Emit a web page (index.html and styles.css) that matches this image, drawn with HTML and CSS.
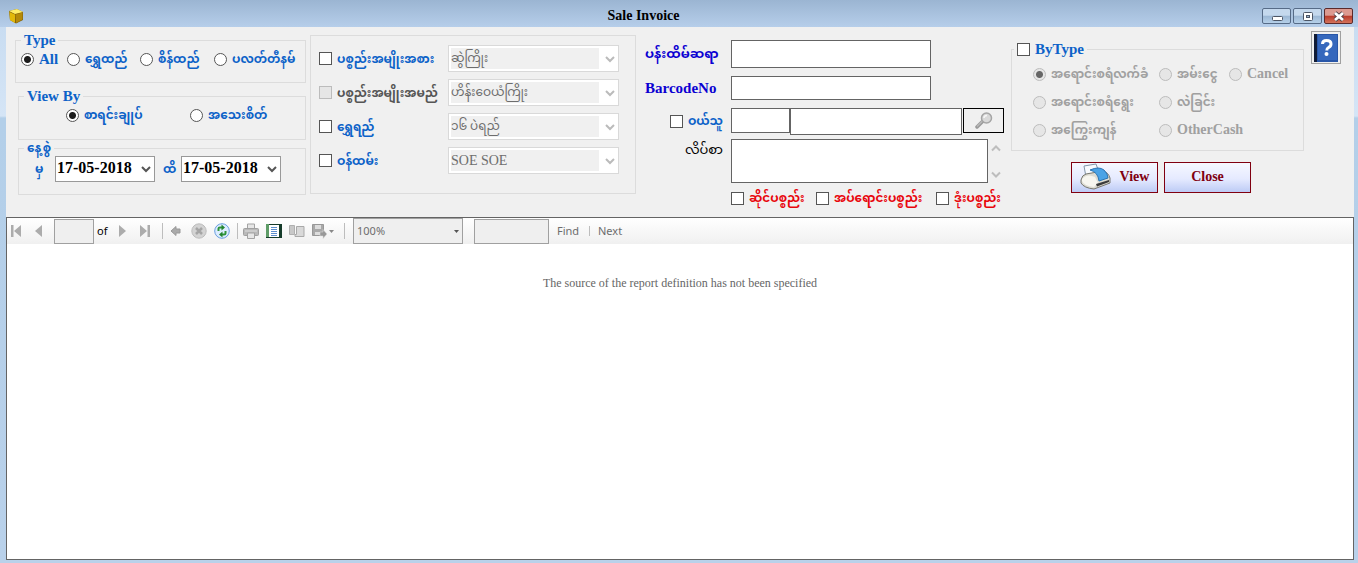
FILE: index.html
```
<!DOCTYPE html>
<html lang="my">
<head>
<meta charset="utf-8">
<title>Sale Invoice</title>
<link rel="stylesheet" href="styles.css">
</head>
<body>
<div class="window">
  <header class="titlebar">
    <svg class="app-icon" width="16" height="16" viewBox="0 0 16 16" aria-hidden="true"><path d="M1 3L9 1L15 4V12L8 15.500L2 12Z" fill="#80600c"/><path d="M1 3L9 1L15 4L7 6Z" fill="#ffed66"/><path d="M1.500 4L7 6.500V15L2 12Z" fill="#e2b809"/><path d="M7.500 6.500L14.500 4.500V11.500L8 15Z" fill="#b58a09"/></svg>
    <h1 class="title">Sale Invoice</h1>
    <div class="window-buttons">
      <button class="win-btn" type="button" aria-label="Minimize"><svg width="28" height="15" viewBox="0 0 28 15"><rect x="9.500" y="7.500" width="10" height="4" rx="1" fill="#fff" stroke="#4d5666"/></svg></button>
      <button class="win-btn" type="button" aria-label="Maximize"><svg width="28" height="15" viewBox="0 0 28 15"><rect x="9.500" y="3.500" width="9" height="8" rx="1" fill="#fff" stroke="#4d5666"/><rect x="12.500" y="6.500" width="3" height="2" fill="#9ab3cf" stroke="#4d5666"/></svg></button>
      <button class="win-btn win-close" type="button" aria-label="Close window"><svg width="28" height="15" viewBox="0 0 28 15"><path d="M10 4L18 11M18 4L10 11" stroke="#534449" stroke-width="4.500"/><path d="M10 4L18 11M18 4L10 11" stroke="#fff" stroke-width="2.800"/></svg></button>
    </div>
  </header>

  <main class="content">
    <form class="filters">
      <div class="left-groups">
        <fieldset class="group type-group">
          <legend>Type</legend>
          <div class="type-options">
            <label class="option latin"><input type="radio" name="type" checked>All</label>
            <label class="option"><input type="radio" name="type">ရွှေထည်</label>
            <label class="option"><input type="radio" name="type">စိန်ထည်</label>
            <label class="option"><input type="radio" name="type">ပလတ်တီနမ်</label>
          </div>
        </fieldset>
        <fieldset class="group view-group">
          <legend>View By</legend>
          <div class="view-options">
            <label class="option"><input type="radio" name="view" checked>စာရင်းချုပ်</label>
            <label class="option"><input type="radio" name="view">အသေးစိတ်</label>
          </div>
        </fieldset>
        <fieldset class="group date-group">
          <legend>နေ့စွဲ</legend>
          <div class="date-row">
            <label for="from">မှ</label><input class="date" id="from" type="text" value="17-05-2018">
            <label for="to">ထိ</label><input class="date" id="to" type="text" value="17-05-2018">
          </div>
        </fieldset>
      </div>

      <div class="panel">
        <label class="option"><input type="checkbox">ပစ္စည်းအမျိုးအစား</label>
        <select class="combo" disabled aria-label="ပစ္စည်းအမျိုးအစား"><option>ဆွဲကြိုး</option></select>
        <label class="option dim"><input type="checkbox" disabled>ပစ္စည်းအမျိုးအမည်</label>
        <select class="combo" disabled aria-label="ပစ္စည်းအမျိုးအမည်"><option>ဟိန်းဝေယံကြိုး</option></select>
        <label class="option"><input type="checkbox">ရွှေရည်</label>
        <select class="combo" disabled aria-label="ရွှေရည်"><option>၁၆ ပဲရည်</option></select>
        <label class="option"><input type="checkbox">ဝန်ထမ်း</label>
        <select class="combo latin" disabled aria-label="ဝန်ထမ်း"><option>SOE SOE</option></select>
      </div>

      <div class="details">
        <label class="field-label" for="smith">ပန်းထိမ်ဆရာ</label>
        <input class="field tall" id="smith" type="text">
        <label class="field-label latin" for="barcode">BarcodeNo</label>
        <input class="field" id="barcode" type="text">
        <label class="option buyer"><input type="checkbox">ဝယ်သူ</label>
        <div class="buyer-row">
          <input class="code" type="text" aria-label="Buyer code"><input class="name" type="text" aria-label="Buyer name">
          <button class="search" type="button" aria-label="Search"><svg width="18" height="17" viewBox="0 0 18 17"><path d="M2 15L8 9" stroke="#999" stroke-width="3.500" stroke-linecap="round"/><path d="M2 14.500L8 8.500" stroke="#bbb" stroke-width="1.200"/><circle cx="11.500" cy="6" r="5" fill="#d9d9d9" stroke="#a5a5a5" stroke-width="1.500"/><path d="M9 6Q9 3.500 12 3.500" fill="none" stroke="#f6f6f6" stroke-width="1.500"/></svg></button>
        </div>
        <label class="address-label" for="address">လိပ်စာ</label>
        <div class="address-row">
          <textarea id="address"></textarea>
          <svg width="16" height="44" viewBox="0 0 16 44" aria-hidden="true"><path d="M4 11.500L8 7.500L12 11.500M4 33.500L8 37.500L12 33.500" fill="none" stroke="#bdbdbd" stroke-width="2"/></svg>
        </div>
        <div class="stock-options">
          <label class="option"><input type="checkbox">ဆိုင်ပစ္စည်း</label>
          <label class="option"><input type="checkbox">အပ်ရောင်းပစ္စည်း</label>
          <label class="option"><input type="checkbox">ဒုံးပစ္စည်း</label>
        </div>
      </div>

      <div class="right-side">
        <fieldset class="group bytype">
          <legend><label class="option latin"><input type="checkbox">ByType</label></legend>
          <div class="bytype-options">
            <label class="option"><input type="radio" name="by" checked disabled>အရောင်းစရံလက်ခံ</label>
            <label class="option"><input type="radio" name="by" disabled>အမ်းငွေ</label>
            <label class="option small-latin"><input type="radio" name="by" disabled>Cancel</label>
            <label class="option"><input type="radio" name="by" disabled>အရောင်းစရံရွေး</label>
            <label class="option wide"><input type="radio" name="by" disabled>လဲခြင်း</label>
            <label class="option"><input type="radio" name="by" disabled>အကြွေးကျန်</label>
            <label class="option wide small-latin"><input type="radio" name="by" disabled>OtherCash</label>
          </div>
        </fieldset>
        <div class="actions">
          <button class="action" type="button"><svg width="32" height="28" viewBox="0 0 32 28" aria-hidden="true"><path d="M4 3L16 1L20 12L6 14Z" fill="#f8fbff" stroke="#8296aa"/><path d="M1 17Q2 12 6 11L23 8Q28 9 30 15V20L14 26Q4 25 1 20Z" fill="#dddcd3" stroke="#77776f"/><path d="M2 16Q7 10 15 14L18 20L14 24Q4 23 2 18Z" fill="#f7f6f0"/><path d="M10 7Q19 3 24 7Q28 11 28 15L19 18Q18 9 10 7Z" fill="#4aa3e6" stroke="#2c74b3"/><path d="M16 21L29 17V19L17 23.500Z" fill="#3b3b3b"/></svg><span>View</span></button>
          <button class="action" type="button">Close</button>
        </div>
      </div>

      <button class="help" type="button" aria-label="Help"><svg width="24" height="28" viewBox="0 0 24 28"><rect width="24" height="28" fill="#2856a8"/><rect x="4" y="1" width="19" height="25" fill="#3668bd"/><rect width="3" height="28" fill="#101b36"/><path d="M8.500 10Q8.500 6.500 12.500 6.500Q17 6.500 17 10Q17 12.500 14.500 13.500Q12.800 14.300 12.800 16.500" fill="none" stroke="#fff" stroke-width="3"/><circle cx="12.500" cy="20" r="2" fill="#fff"/></svg></button>
    </form>

    <section class="viewer">
      <div class="toolbar">
        <button type="button" aria-label="First page"><svg width="16" height="16" viewBox="0 0 16 16"><path d="M3 2h2.500v12H3zM13 2v12L6 8z" fill="#acacac"/></svg></button>
        <button type="button" aria-label="Previous page"><svg width="16" height="16" viewBox="0 0 16 16"><path d="M11 2v12L4 8z" fill="#acacac"/></svg></button>
        <input class="page" type="text" aria-label="Page">
        <span class="of">of</span>
        <button type="button" aria-label="Next page"><svg width="16" height="16" viewBox="0 0 16 16"><path d="M4 2v12L11 8z" fill="#acacac"/></svg></button>
        <button type="button" aria-label="Last page"><svg width="16" height="16" viewBox="0 0 16 16"><path d="M10.500 2H13v12h-2.500zM3 2v12L10 8z" fill="#acacac"/></svg></button>
        <i class="sep"></i>
        <button type="button" aria-label="Back"><svg width="16" height="16" viewBox="0 0 16 16"><path d="M3 8L8 3.500V6h4v4H8v2.500z" fill="#aaa" stroke="#999"/></svg></button>
        <button type="button" aria-label="Stop"><svg width="16" height="16" viewBox="0 0 16 16"><circle cx="8" cy="8" r="7.200" fill="#d3d3d3" stroke="#bcbcbc"/><path d="M5 5L11 11M11 5L5 11" stroke="#a5a5a5" stroke-width="2.500"/></svg></button>
        <button type="button" aria-label="Refresh"><svg width="16" height="16" viewBox="0 0 16 16"><circle cx="8" cy="8" r="7.300" fill="#dcecff" stroke="#6b9fdf"/><path d="M4.500 8V5.500Q4.500 4.500 6 4.500H8M11.500 8v2.500Q11.500 11.500 10 11.500H8" fill="none" stroke="#2e943a" stroke-width="2"/><path d="M7.500 1.500L11 4.500L7.500 7.500zM8.500 8.500L5 11.500L8.500 14.500z" fill="#23842f"/></svg></button>
        <i class="sep"></i>
        <button type="button" aria-label="Print"><svg width="16" height="16" viewBox="0 0 16 16"><path d="M4.500 6V1h7v5" fill="#e6e6e6" stroke="#a3a3a3"/><rect x=".5" y="5.500" width="15" height="7" rx="1" fill="#b9b9b9" stroke="#a0a0a0"/><path d="M2 8h12" stroke="#ddd"/><path d="M4.500 10h7v5.500h-7z" fill="#e6e6e6" stroke="#a3a3a3"/></svg></button>
        <button type="button" aria-label="Print layout"><svg width="16" height="16" viewBox="0 0 16 16"><path d="M0 1h16v14H0z" fill="#153b2a"/><path d="M0 1h3v13H0z" fill="#5e9c67"/><path d="M3 2h10v12H3z" fill="#fff"/><path d="M5 4.500h6M5 6.500h6M5 8.500h6M5 10.500h6M5 12.500h6" stroke="#5d8fce"/></svg></button>
        <button type="button" aria-label="Page setup"><svg width="16" height="16" viewBox="0 0 16 16"><path d="M.5 2.500h5v9h-5z" fill="#c8c8c8" stroke="#b0b0b0"/><path d="M7.500 3.500h7.500v10h-9v-2h1.500z" fill="#d9d9d9" stroke="#a9a9a9"/></svg></button>
        <button type="button" aria-label="Export"><svg width="25" height="16" viewBox="0 0 25 16"><path d="M.5 1.500h11v11h-11z" fill="#a9a9a9" stroke="#989898"/><path d="M3 2h6v4H3zM3 9h6v3H3z" fill="#ddd"/><path d="M8 9h3V6.500L15 11L11 15.500V13H8z" fill="#999" stroke="#ddd" stroke-width=".5"/><path d="M17 7h5L19.500 10z" fill="#888"/></svg></button>
        <i class="sep"></i>
        <select class="zoom" disabled aria-label="Zoom"><option>100%</option></select>
        <input class="find-text" type="text" aria-label="Find text">
        <button class="text-btn" type="button">Find</button>
        <i class="sep short"></i>
        <button class="text-btn" type="button">Next</button>
      </div>
      <p class="message">The source of the report definition has not been specified</p>
    </section>
  </main>
</div>
</body>
</html>
```
FILE: styles.css
```
* { box-sizing: border-box; }

html, body { height: 100%; }

body {
  margin: 0;
  font: bold 14px/16px "Liberation Serif", "Noto Sans Myanmar", Padauk, "Noto Sans", serif;
  color: #0c62c8;
}

button, input, select, textarea { font: inherit; color: inherit; margin: 0; }
button { padding: 0; }
svg { display: block; }

.window {
  min-height: 100%;
  display: flex;
  flex-direction: column;
  padding: 0 4px 3px 6px;
  background: linear-gradient(#c5daf0 0, #d5e5f6 116px, #b3cfe9 118px, #b9d1ea 100%);
}

.titlebar {
  display: grid;
  grid-template-columns: 1fr auto 1fr;
  align-items: center;
  height: 27px;
  margin: 0 -4px 0 -6px;
  padding: 4px 5px 0 8px;
  background: linear-gradient(#9bb5d2, #b6ceea);
}

.title { margin: 0 74px 0 0; color: #000; font-size: 14px; line-height: 16px; }

.window-buttons { display: flex; gap: 2px; justify-content: flex-end; }

.win-btn {
  width: 29px;
  height: 16px;
  display: grid;
  place-items: center;
  border: 1px solid #566b87;
  border-radius: 2px;
  background: linear-gradient(#c4d8ed 45%, #9bb7d4 50%, #b6d0e9);
}

.win-close {
  border-color: #5b2a2b;
  background: linear-gradient(#dc9a90 45%, #b93a2a 50%, #d4735c);
}

.content { flex: 1; display: flex; flex-direction: column; background: #f0f0f0; }

.filters {
  display: grid;
  grid-template-columns: 291px 323px 361px 293px 30px;
  column-gap: 7px;
  align-items: start;
  min-height: 190px;
  padding: 4px 0 0 9px;
}

.left-groups { display: flex; flex-direction: column; padding-top: 1px; }

.group { margin: 0; padding: 0; border: 1px solid #dcdcdc; min-width: 0; }
.group legend { height: 16px; margin-left: 5px; padding: 0 3px; font-size: 15px; }

.type-group { height: 51px; }
.view-group { height: 52px; margin: 5px 0 0 3px; }
.date-group { height: 55px; margin-left: 3px; }
.date-group legend { font-size: 12px; }

.option { display: flex; align-items: center; gap: 5px; white-space: nowrap; font-size: 12px; }
.latin { font-size: 15px; }
.small-latin { font-size: 14px; }

input[type="radio"], input[type="checkbox"] {
  appearance: none;
  flex: none;
  width: 13px;
  height: 13px;
  border: 1px solid #555;
  background: #fff;
}
input[type="radio"] { border-radius: 50%; }
input[type="radio"]:checked { background: radial-gradient(circle, #1c1c1c 3px, #fff 4px); }
input[type="radio"]:disabled, input[type="checkbox"]:disabled { border-color: #bcbcbc; background: #e6e6e6; }
input[type="radio"]:checked:disabled { background: radial-gradient(circle, #666 3px, #e6e6e6 4px); }

.type-options { display: grid; grid-template-columns: 46px 73px 74px auto; padding: 3px 0 0 5px; }
.view-options { display: grid; grid-template-columns: 124px auto; padding: 3px 0 0 47px; }

.date-row {
  display: grid;
  grid-template-columns: 20px 100px 26px 100px;
  align-items: center;
  padding-left: 16px;
  font-size: 12px;
}
.date-row label:nth-of-type(2) { padding-left: 8px; }

.date {
  height: 26px;
  padding: 0 0 2px 1px;
  border: 1px solid #999;
  color: #000;
  font-size: 16px;
  background: #fff url("data:image/svg+xml,%3Csvg xmlns='http://www.w3.org/2000/svg' width='10' height='8'%3E%3Cpath d='M1 2L5 6L9 2' fill='none' stroke='%23555' stroke-width='2'/%3E%3C/svg%3E") no-repeat right 3px center;
}

.panel {
  display: grid;
  grid-template-columns: 122px 171px;
  grid-template-rows: repeat(4, 27px);
  gap: 7px;
  height: 159px;
  margin: 4px 0 0 -3px;
  padding: 9px 0 0 8px;
  border: 1px solid #dcdcdc;
}
.dim { color: #555; }

.combo {
  appearance: none;
  width: 100%;
  padding: 0 22px 0 2px;
  border: 1px solid #d9d9d9;
  border-radius: 0;
  opacity: 1;
  color: #6d6d6d;
  font-size: 12px;
  font-weight: normal;
  line-height: 25px;
  background:
    url("data:image/svg+xml,%3Csvg xmlns='http://www.w3.org/2000/svg' width='10' height='8'%3E%3Cpath d='M1 2L5 6L9 2' fill='none' stroke='%23bbb' stroke-width='2'/%3E%3C/svg%3E") no-repeat right 3px center,
    linear-gradient(#f0f0f0, #f0f0f0) no-repeat 2px 2px / 148px 21px,
    #fff;
}
.combo.latin { font-size: 14px; line-height: 22px; }

.details {
  display: grid;
  grid-template-columns: 78px 1fr;
  grid-template-rows: 28px 24px 26px 44px 16px;
  gap: 8px;
  padding: 9px 0 0 2px;
  align-items: center;
}
.field-label { color: #0b00d2; font-size: 13px; white-space: nowrap; }
.field-label.latin { font-size: 15px; }
.details input[type="text"], .details textarea {
  border: 1px solid #646464;
  background: #fff;
  padding: 1px 3px;
  min-width: 0;
}
.field { width: 200px; height: 24px; }
.field.tall { height: 28px; }
.buyer { justify-content: flex-end; }
.buyer-row { display: flex; align-items: flex-start; }
.buyer-row .code { width: 59px; height: 25px; }
.buyer-row .name { width: 172px; height: 27px; }
.search {
  width: 41px;
  height: 25px;
  margin-left: 1px;
  display: grid;
  place-items: center;
  border: 1px solid #000;
  background: #f0f0f0;
}
.address-label { align-self: start; text-align: right; color: #000; font-size: 13px; font-weight: normal; }
.address-row { display: flex; margin-top: -6px; }
.address-row textarea { width: 257px; height: 44px; resize: none; }
.stock-options {
  grid-column: 2;
  display: grid;
  grid-template-columns: 85px 120px auto;
  margin-top: -8px;
  color: #e8060d;
}

.right-side { padding-top: 10px; }
.bytype { height: 110px; }
.group.bytype legend { margin-left: 2px; }
.bytype-options {
  display: grid;
  grid-template-columns: 126px 70px auto;
  grid-template-rows: repeat(3, 28px);
  align-items: center;
  padding: 3px 0 0 21px;
  color: #a0a0a0;
}
.wide { grid-column: span 2; }

.actions { display: flex; gap: 6px; padding: 11px 0 0 60px; }
.action {
  display: flex;
  align-items: center;
  justify-content: center;
  gap: 8px;
  width: 87px;
  height: 31px;
  padding-bottom: 2px;
  border: 1px solid #800010;
  background: linear-gradient(#f6f8ff, #e5eaff 55%, #bdcbf5);
  color: #800010;
}

.help {
  width: 30px;
  height: 33px;
  display: grid;
  place-items: center;
  border: 1px solid #a0a0a0;
  background: #f0f0f0;
}

.viewer {
  flex: 1;
  border: 1px solid #646464;
  background: #fff;
  font-weight: normal;
}

.toolbar {
  display: grid;
  grid-template-columns: 23px 23px 43px 18px 22px 20px 11px 23px 23px 18px 11px 23px 23px 23px 27px 14px 121px 83px 27px 14px auto;
  justify-content: start;
  align-items: center;
  height: 26px;
  padding: 0 0 1px 1px;
  background: linear-gradient(#fff, #f0f0f0);
  font: 11px/14px "Noto Sans", "DejaVu Sans", sans-serif;
  color: #6d6d6d;
}
.toolbar button { border: 0; background: none; justify-self: start; }
.toolbar input, .zoom { border: 1px solid #a0a0a0; border-radius: 0; background: #efefef; }
.page { width: 40px; height: 25px; }
.of { color: #000; }
.sep { width: 1px; height: 16px; margin-left: 5px; background: #bdbdbd; }
.sep.short { height: 10px; }
.find-text { width: 75px; height: 25px; }

.zoom {
  appearance: none;
  width: 110px;
  height: 26px;
  padding: 0 3px;
  opacity: 1;
  color: #6d6d6d;
}
.toolbar .zoom {
  background: #efefef url("data:image/svg+xml,%3Csvg xmlns='http://www.w3.org/2000/svg' width='5' height='3'%3E%3Cpath d='M0 0h5L2.500 3z' fill='%23555'/%3E%3C/svg%3E") no-repeat right 3px center;
}

.message { margin: 32px 0 0; text-align: center; color: #666; font-size: 12px; line-height: 15px; }
```
